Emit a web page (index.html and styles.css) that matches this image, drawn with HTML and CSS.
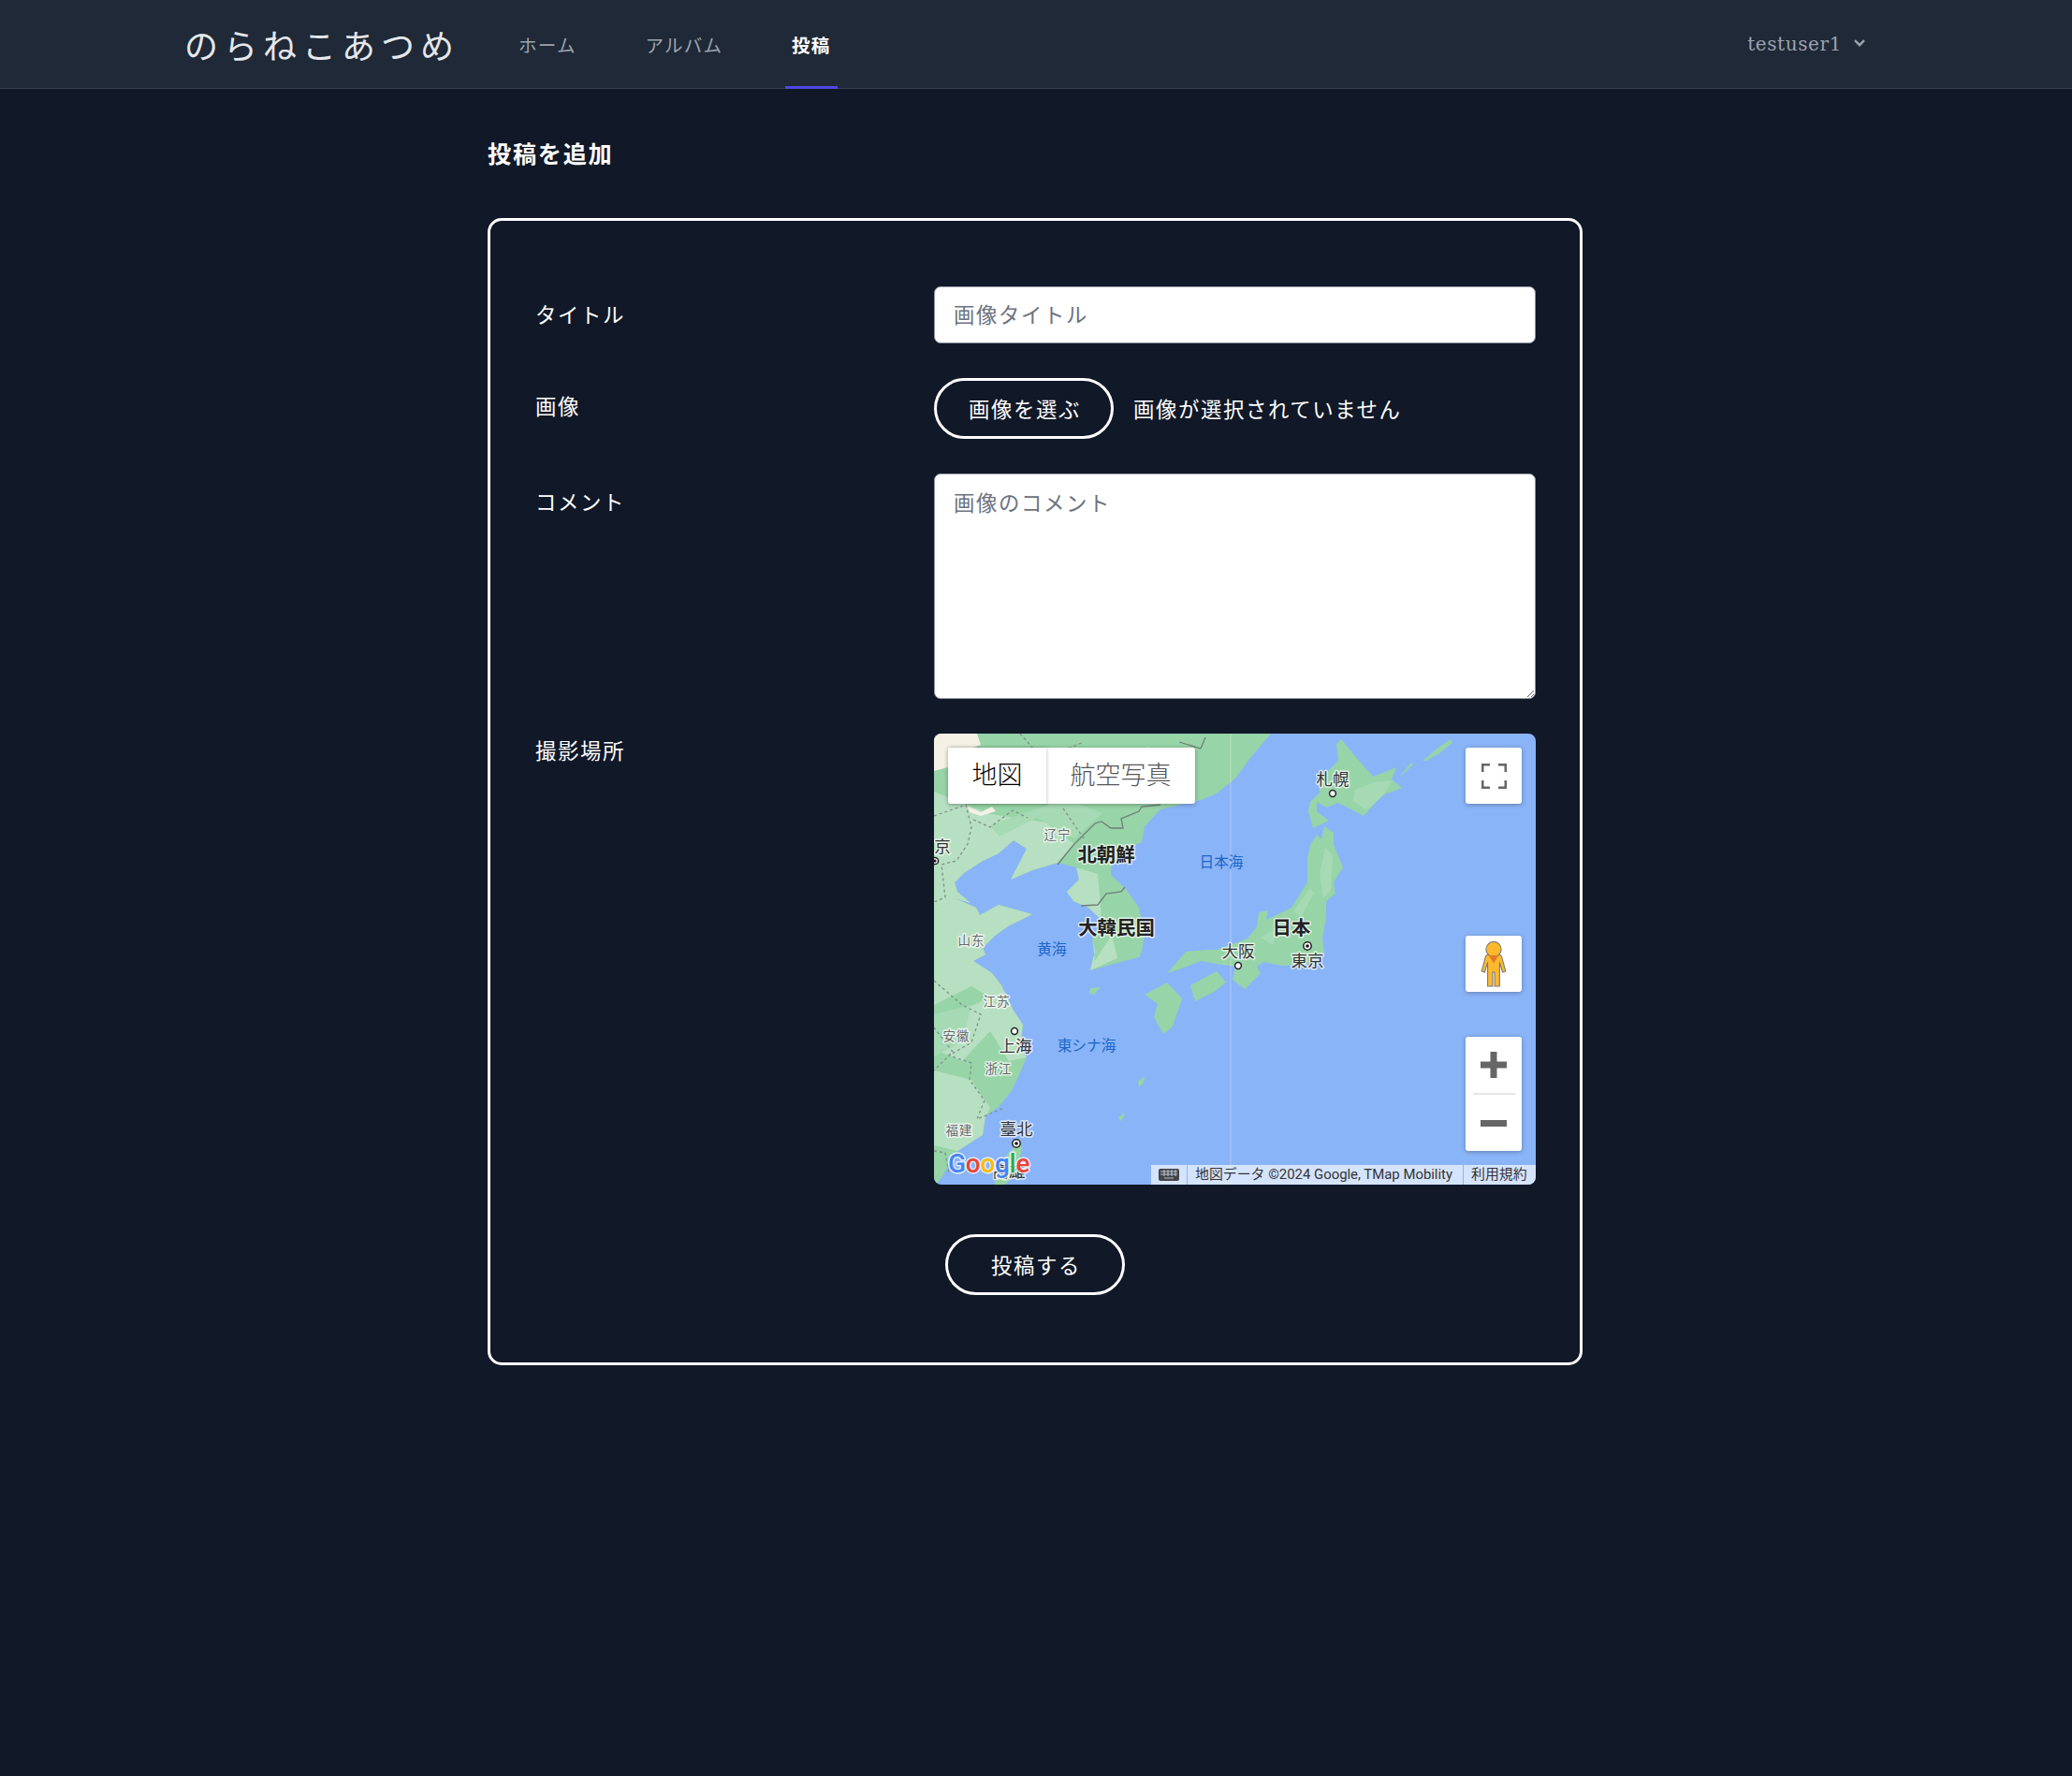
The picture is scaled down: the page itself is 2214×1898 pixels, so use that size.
FILE: index.html
```html
<!doctype html>
<html lang="ja">
  <head>
    <meta charset="utf-8" />
    <title>のらねこあつめ - 投稿を追加</title>
    <link rel="stylesheet" href="styles.css">
  </head>
  <body>
    <header class="site-header">
      <a class="brand" href="#">のらねこあつめ</a>
      <nav class="site-nav">
        <a class="nav-link" href="#">ホーム</a>
        <a class="nav-link" href="#">アルバム</a>
        <a class="nav-link is-active" href="#">投稿</a>
      </nav>
      <div class="user-menu">
        <span class="user-name">testuser1</span>
        <svg class="user-chevron" viewBox="0 0 12 8" width="12" height="8"><path d="M1 1.2 6 6.2 11 1.2"/></svg>
      </div>
    </header>

    <main class="page">
      <h1 class="page-title">投稿を追加</h1>
      <form class="post-form">
        <div class="form-grid">
          <label class="field-label label-title">タイトル</label>
          <input class="text-input" type="text" placeholder="画像タイトル">

          <label class="field-label label-image">画像</label>
          <div class="file-row">
            <button class="pill-button" type="button">画像を選ぶ</button>
            <span class="file-name">画像が選択されていません</span>
          </div>

          <label class="field-label label-comment">コメント</label>
          <textarea class="text-input comment-input" placeholder="画像のコメント"></textarea>

          <label class="field-label label-place">撮影場所</label>
          <div class="map">
            <svg class="map-canvas" viewBox="0 0 643 482" width="643" height="482">
              <rect class="sea" width="643" height="482"/>
              <!-- mainland -->
              <polygon class="land" points="0,0 360,0 338,26 322,48 302,64 285,71 242,81 225,99 222,116 205,123 189,143 189,151 205,166 219,186 225,213 222,233 219,239 192,246 167,253 172,233 169,219 179,199 165,186 149,179 142,169 155,156 152,143 132,138 105,146 82,156 99,123 85,114 69,128 52,136 32,149 22,159 25,169 39,181 22,176 45,186 49,194 69,183 105,193 79,206 65,216 52,229 55,236 42,243 62,256 72,269 85,296 95,311 92,336 99,346 89,369 82,383 69,399 55,409 52,429 25,446 9,473 2,482 0,482"/>
              <polygon class="land-light" points="0,62 60,86 120,95 150,118 132,138 105,146 82,156 99,123 85,114 69,128 52,136 32,149 22,159 25,169 39,181 22,176 0,190"/>
              <polygon class="land-light" points="0,190 22,176 45,186 49,194 69,183 105,193 79,206 65,216 52,229 55,236 42,243 62,256 72,269 60,282 40,270 0,290"/>
              <polygon class="land-light" points="142,169 155,156 152,143 175,150 178,185 179,199 169,219 172,243 190,215 196,240 167,253 172,233 169,219 179,199 165,186 149,179"/>
              <polygon class="land-light" points="60,282 72,269 85,296 95,311 92,336 99,346 80,350 60,318 30,350 6,340 20,300"/>
              <polygon class="land-light" points="0,360 40,370 60,400 55,409 52,429 25,446 0,440"/>
              <polygon class="land-light" points="180,30 230,14 260,40 210,72 170,60"/>
              <polygon class="land-mid" points="60,98 140,70 180,85 150,112 110,90 70,110"/>
              <polygon class="land-mid" points="0,300 40,290 30,330 0,345"/>
              <polygon class="land-beige" points="0,0 46,0 50,12 28,20 22,34 0,40"/>
              <polygon class="land-beige" points="36,78 50,84 62,78 66,83 50,88 38,84"/>
              <!-- Hokkaido -->
              <polygon class="land" points="435,6 449,23 469,46 494,36 489,49 500,58 479,66 459,88 432,74 419,79 409,73 409,83 422,93 405,101 400,83 402,73 412,63 412,49 432,29 430,11"/>
              <polygon class="land-mid" points="450,60 470,52 490,50 480,66 462,82 448,72"/>
              <!-- Kuril -->
              <polygon class="land" points="497,46 510,31 512,33 500,44"/>
              <polygon class="land" points="522,29 540,14 552,6 554,10 540,21 526,29"/>
              <!-- Honshu -->
              <polygon class="land" points="249,256 269,233 292,231 302,231 335,219 345,206 347,191 357,189 355,199 382,186 399,159 399,133 402,119 409,108 414,113 417,99 427,106 427,119 437,143 427,159 429,171 419,179 419,196 415,219 417,234 400,246 372,248 352,244 345,249 349,256 332,273 319,263 322,249 302,246 285,243 259,253"/>
              <polygon class="land-mid" points="418,122 426,130 424,168 416,176 412,150"/>
              <polygon class="land-mid" points="384,190 402,165 406,170 392,196"/>
              <polygon class="land-mid" points="349,218 368,206 362,226"/>
              <!-- Shikoku, Kyushu -->
              <polygon class="land" points="274,269 302,254 312,266 299,276 279,286"/>
              <polygon class="land" points="225,279 249,266 265,283 255,313 245,321 235,303 239,289"/>
              <!-- small islands -->
              <polygon class="land" points="167,272 178,271 171,279 166,278"/>
              <polygon class="land" points="218,372 225,366 224,373 219,378"/>
              <polygon class="land" points="197,410 204,405 202,411 199,414"/>
              <!-- Taiwan -->
              <polygon class="land" points="92,436 94,443 89,469 76,482 64,482 69,473 78,450"/>
              <!-- borders -->
              <polyline class="border" points="132,140 149,119 172,96 179,94 189,101 202,101 200,91 219,83 222,78 242,76"/>
              <polyline class="border" points="157,184 175,183 184,171 200,169 204,164"/>
              <polyline class="border" points="262,9 285,16 290,4"/>
              <polyline class="border-dash" points="92,0 106,16 132,20 158,10"/>
              <polyline class="border-dash" points="0,88 34,76 40,100 36,118 24,136 8,140 12,175 0,180"/>
              <polyline class="border-dash" points="42,92 60,100 84,82 100,90"/>
              <polyline class="border-dash" points="138,80 160,112"/>
              <polyline class="border-dash" points="0,264 30,290 50,300 40,330 16,344 40,352 38,370 54,392 46,412 75,400"/>
              <polyline class="border-dash" points="0,314 20,340 0,360"/>
              <polyline class="border-dash" points="0,446 12,448 16,470"/>
              <line class="date-line" x1="317" y1="0" x2="317" y2="482"/>

              <text class="place place-small" x="132" y="109">辽宁</text>
              <text class="place place-small" x="40" y="222">山东</text>
              <text class="place place-small" x="67" y="287">江苏</text>
              <text class="place place-small" x="24" y="324">安徽</text>
              <text class="place place-small" x="69" y="359">浙江</text>
              <text class="place place-small" x="27" y="425">福建</text>
              <text class="place place-city" x="9" y="121">京</text>
              <text class="place place-city" x="325" y="233">大阪</text>
              <text class="place place-city" x="399" y="243">東京</text>
              <text class="place place-city" x="426" y="49">札幌</text>
              <text class="place place-city" x="87" y="334">上海</text>
              <text class="place place-city" x="88" y="423">臺北</text>
              <text class="place place-country" x="184" y="130">北朝鮮</text>
              <text class="place place-country" x="195" y="208">大韓民国</text>
              <text class="place place-country" x="382" y="208">日本</text>
              <text class="place place-sea" x="307" y="138">日本海</text>
              <text class="place place-sea" x="126" y="231">黄海</text>
              <text class="place place-sea" x="163" y="334">東シナ海</text>
              <text class="place place-city" x="80" y="468">高雄</text>

              <circle class="city-dot" cx="426" cy="64" r="3.4"/>
              <circle class="city-dot" cx="325" cy="248" r="3.4"/>
              <circle class="city-dot" cx="86" cy="318" r="3.4"/>
              <circle class="city-dot" cx="399" cy="227" r="4.2"/>
              <circle class="city-core" cx="399" cy="227" r="1.8"/>
              <circle class="city-dot" cx="88" cy="438" r="4.2"/>
              <circle class="city-core" cx="88" cy="438" r="1.8"/>
              <circle class="city-dot" cx="1" cy="136" r="3.6"/>
              <circle class="city-core" cx="1" cy="136" r="1.6"/>

              <text class="google" x="15" y="469"><tspan class="g-blue">G</tspan><tspan class="g-red">o</tspan><tspan class="g-yellow">o</tspan><tspan class="g-blue">g</tspan><tspan class="g-green">l</tspan><tspan class="g-red">e</tspan></text>
            </svg>

            <div class="map-type">
              <button class="map-type-button is-current" type="button">地図</button>
              <button class="map-type-button" type="button">航空写真</button>
            </div>

            <button class="map-control fullscreen" type="button">
              <svg viewBox="0 0 27 27" width="27" height="27"><path d="M1.2 9V1.2H9M18 1.2h7.8V9M25.8 18v7.8H18M9 25.8H1.2V18"/></svg>
            </button>

            <button class="map-control pegman" type="button">
              <svg viewBox="0 0 26 46" width="28" height="49">
                <path class="peg-body" d="M7 13h12l2 2 4 15-3 1-3-10v24h-5V31h-2v14H7V21L4 31l-3-1 4-15z"/>
                <circle class="peg-body" cx="13" cy="8" r="7.6"/>
                <path class="peg-vee" d="M8 14h10l-5 8z"/>
              </svg>
            </button>

            <div class="map-control zoom">
              <button class="zoom-button" type="button">
                <svg viewBox="0 0 28 28" width="28" height="28"><path d="M10.5 0h7v10.5H28v7H17.5V28h-7V17.5H0v-7h10.5z"/></svg>
              </button>
              <div class="zoom-divider"></div>
              <button class="zoom-button" type="button">
                <svg viewBox="0 0 28 7" width="28" height="7"><path d="M0 0h28v7H0z"/></svg>
              </button>
            </div>

            <div class="attribution">
              <span class="attr-cell attr-keys">
                <svg viewBox="0 0 22 13" width="22" height="13"><path d="M2 0h18a2 2 0 0 1 2 2v9a2 2 0 0 1-2 2H2a2 2 0 0 1-2-2V2a2 2 0 0 1 2-2z"/><path class="key-gap" d="M2 3h18M2 6h18M6 1v7M10 1v7M14 1v7M18 1v7M6 10h10"/></svg>
              </span>
              <span class="attr-cell attr-text">地図データ ©2024 Google, TMap Mobility</span>
              <span class="attr-cell attr-terms">利用規約</span>
            </div>
          </div>
        </div>
        <div class="form-actions">
          <button class="pill-button" type="submit">投稿する</button>
        </div>
      </form>
    </main>
  </body>
</html>
```

FILE: styles.css
```css
*
{
    box-sizing: border-box;
}

body
{
    margin: 0;
    min-height: 100vh;
    background: #111827;
    color: #fff;
    font-family: "Noto Sans CJK JP", "Noto Sans", sans-serif;
    font-size: 22.4px;
    letter-spacing: 1.6px;
}

a
{
    color: inherit;
    text-decoration: none;
}

button
{
    font: inherit;
    letter-spacing: inherit;
    color: inherit;
    cursor: pointer;
}

/* header */

.site-header
{
    display: flex;
    align-items: stretch;
    height: 95px;
    padding: 0 197px;
    background: #1f2937;
    border-bottom: 1px solid #374151;
}

.brand
{
    display: flex;
    align-items: center;
    font-size: 36px;
    font-weight: 400;
    letter-spacing: 6px;
    color: #e5e7eb;
    width: 288px;
    white-space: nowrap;
}

.site-nav
{
    display: flex;
    margin-left: 62px;
    gap: 59.6px;
}

.nav-link
{
    display: flex;
    align-items: center;
    margin-bottom: -1px;
    padding: 2px 7px 0;
    border-bottom: 3px solid transparent;
    font-size: 19.6px;
    letter-spacing: 1.2px;
    color: #9ca3af;
}

.nav-link.is-active
{
    color: #fff;
    font-weight: 700;
    border-bottom-color: #4f46e5;
}

.user-menu
{
    display: flex;
    align-items: center;
    gap: 13px;
    margin-left: auto;
    padding-right: 24px;
    color: #9ca3af;
}

.user-name
{
    font-family: "DejaVu Serif", serif;
    font-size: 20px;
    letter-spacing: 0.6px;
}

.user-chevron
{
    margin-bottom: 3px;
    fill: none;
    stroke: #9ca3af;
    stroke-width: 2.4;
}

/* form */

.page
{
    width: 1170px;
    margin: 0 523px 0 521px;
}

.page-title
{
    margin: 0;
    padding-top: 49px;
    height: 138px;
    font-size: 25.2px;
    line-height: 38px;
    font-weight: 700;
    letter-spacing: 1.7px;
}

.post-form
{
    height: 1226px;
    padding: 70px 47px 0 48px;
    border: 3px solid #fff;
    border-radius: 15px;
}

.form-grid
{
    display: grid;
    grid-template-columns: 426px 643px;
    grid-template-rows: 61px 65px 241px 482px;
    row-gap: 37px;
}

.field-label
{
    line-height: 34px;
    font-weight: 400;
}

.label-title,
.label-image,
.label-comment
{
    padding-top: 12px;
}

.label-place
{
    padding-top: 0;
}

.text-input
{
    display: block;
    width: 100%;
    height: 100%;
    padding: 12px 20px 16px;
    border: 1.5px solid #8b93a1;
    border-radius: 7px;
    background: #fff;
    color: #111827;
    font: inherit;
    line-height: 34px;
    letter-spacing: inherit;
}

.text-input::placeholder
{
    color: #6b7280;
    opacity: 1;
}

.file-row
{
    display: flex;
    align-items: center;
    gap: 21px;
}

.file-name
{
    padding-bottom: 2px;
}

.pill-button
{
    width: 192px;
    height: 65px;
    padding: 0 0 2px 2px;
    border: 3px solid #fff;
    border-radius: 33px;
    background: transparent;
}

.form-actions
{
    display: flex;
    justify-content: center;
    margin-top: 53px;
    padding-right: 1px;
}

/* map */

.map
{
    position: relative;
    height: 482px;
    border-radius: 8px;
    overflow: hidden;
    font-family: Roboto, "Noto Sans CJK JP", sans-serif;
    letter-spacing: 0;
}

.map-canvas
{
    display: block;
}

.sea { fill: #8ab4f8; }
.land { fill: #97d4a7; }
.land-light { fill: #b6e0c1; }
.land-mid { fill: #a6dab4; }
.land-beige { fill: #f5f0e4; }

.border
{
    fill: none;
    stroke: #6f7f78;
    stroke-width: 1.3;
}

.border-dash
{
    fill: none;
    stroke: #80908a;
    stroke-width: 1.3;
    stroke-dasharray: 3 3;
}

.date-line
{
    stroke: #fff;
    stroke-opacity: 0.28;
    stroke-width: 1;
}

.place
{
    font-family: "Noto Sans CJK JP", sans-serif;
    text-anchor: middle;
    dominant-baseline: central;
    paint-order: stroke;
    stroke: #fff;
    stroke-opacity: 0.7;
    stroke-width: 3px;
    stroke-linejoin: round;
    transform: translateY(-2px);
}

.place-small
{
    font-size: 13.5px;
    letter-spacing: 1px;
    fill: #6a6a6a;
}

.place-city
{
    font-size: 17.5px;
    fill: #333;
}

.place-country
{
    font-size: 20.4px;
    font-weight: 700;
    fill: #222;
}

.place-sea
{
    font-size: 15.7px;
    fill: #1a66c8;
    stroke: none;
}

.city-dot
{
    fill: #fff;
    stroke: #222;
    stroke-width: 1.5;
}

.city-core
{
    fill: #111;
}

.google
{
    font-family: Roboto, sans-serif;
    font-size: 28px;
    font-weight: 500;
    letter-spacing: -0.3px;
    paint-order: stroke;
    stroke: #fff;
    stroke-opacity: 0.75;
    stroke-width: 3px;
    stroke-linejoin: round;
}

.g-blue { fill: #4285f4; }
.g-red { fill: #ea4335; }
.g-yellow { fill: #fbbc05; }
.g-green { fill: #34a853; }

.map-type
{
    position: absolute;
    left: 15px;
    top: 15px;
    display: flex;
    height: 60px;
    border-radius: 3px;
    background: #fff;
    box-shadow: 0 1px 5px rgba(0, 0, 0, 0.3);
}

.map-type-button
{
    width: 159px;
    height: 60px;
    padding: 0 0 5px;
    border: 0;
    background: transparent;
    font-size: 27px;
    font-weight: 300;
    color: #565656;
}

.map-type-button.is-current
{
    width: 105px;
    color: #000;
    box-shadow: 1px 0 3px rgba(0, 0, 0, 0.18);
}

.map-control
{
    position: absolute;
    left: 568px;
    width: 60px;
    padding: 0;
    border: 0;
    border-radius: 3px;
    background: #fff;
    box-shadow: 0 1px 5px rgba(0, 0, 0, 0.3);
}

.fullscreen,
.pegman
{
    display: flex;
    align-items: center;
    justify-content: center;
    height: 60px;
}

.fullscreen
{
    top: 15px;
}

.fullscreen svg
{
    fill: none;
    stroke: #666;
    stroke-width: 2.6;
}

.pegman
{
    top: 216px;
}

.peg-body
{
    fill: #fdb92b;
    stroke: #777;
    stroke-width: 1;
}

.peg-vee
{
    fill: #e07b28;
}

.zoom
{
    top: 324px;
    height: 122px;
}

.zoom-button
{
    display: flex;
    align-items: center;
    justify-content: center;
    width: 60px;
    height: 60px;
    padding: 0;
    border: 0;
    background: transparent;
}

.zoom-button svg
{
    fill: #666;
}

.zoom-divider
{
    width: 45px;
    height: 2px;
    margin: 0 auto;
    background: #e6e6e6;
}

.attribution
{
    position: absolute;
    right: 0;
    bottom: 0;
    display: flex;
    gap: 1px;
    height: 21px;
    font-size: 14.9px;
    line-height: 21px;
    color: #333;
    white-space: nowrap;
}

.attr-cell
{
    background: rgba(255, 255, 255, 0.64);
}

.attr-keys
{
    display: flex;
    align-items: center;
    justify-content: center;
    width: 38px;
}

.attr-keys svg
{
    fill: #444;
}

.key-gap
{
    fill: none;
    stroke: #d3e1f7;
    stroke-width: 0.8;
}

.attr-text
{
    width: 294px;
    padding-left: 8px;
}

.attr-terms
{
    width: 77px;
    padding-left: 8px;
}
```
